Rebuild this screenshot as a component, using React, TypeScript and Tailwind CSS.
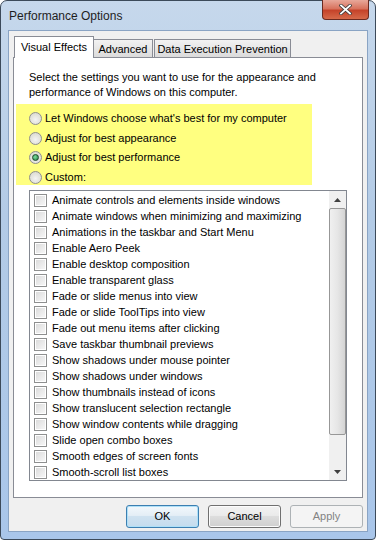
import React from "react";

const effects = [
  "Animate controls and elements inside windows",
  "Animate windows when minimizing and maximizing",
  "Animations in the taskbar and Start Menu",
  "Enable Aero Peek",
  "Enable desktop composition",
  "Enable transparent glass",
  "Fade or slide menus into view",
  "Fade or slide ToolTips into view",
  "Fade out menu items after clicking",
  "Save taskbar thumbnail previews",
  "Show shadows under mouse pointer",
  "Show shadows under windows",
  "Show thumbnails instead of icons",
  "Show translucent selection rectangle",
  "Show window contents while dragging",
  "Slide open combo boxes",
  "Smooth edges of screen fonts",
  "Smooth-scroll list boxes",
];

const options = [
  { label: "Let Windows choose what's best for my computer", checked: false },
  { label: "Adjust for best appearance", checked: false },
  { label: "Adjust for best performance", checked: true },
  { label: "Custom:", checked: false },
];

function Radio({ checked }: { checked: boolean }) {
  return (
    <span className="flex h-[13px] w-[13px] shrink-0 items-center justify-center rounded-full border border-[#8f8f8f] bg-[radial-gradient(circle_at_50%_60%,#f4f4f4,#d4d4c8)]">
      {checked && (
        <span className="h-[7px] w-[7px] rounded-full border border-[#1d4a2a] bg-[radial-gradient(circle_at_40%_40%,#7ee0a0,#1f7a3c)]" />
      )}
    </span>
  );
}

function Check() {
  return (
    <span className="flex h-[13px] w-[13px] shrink-0 items-center justify-center border border-[#8e8f8f] bg-white">
      <span className="h-[9px] w-[9px] bg-[linear-gradient(135deg,#dcdcdc,#f6f6f6)]" />
    </span>
  );
}

function Arrow({ up }: { up?: boolean }) {
  return (
    <svg width="7" height="4" viewBox="0 0 7 4">
      {up ? <path d="M0 4 L3.5 0 L7 4 Z" fill="#404040" /> : <path d="M0 0 L3.5 4 L7 0 Z" fill="#404040" />}
    </svg>
  );
}

export default function App() {
  return (
    <div
      className="h-[541px] w-[377px] overflow-hidden whitespace-nowrap bg-white text-[11px] leading-none text-black"
      style={{ fontFamily: "'Liberation Sans', Arial, sans-serif" }}
    >
      <div className="flex h-[540px] w-[376px] flex-col rounded-t-[7px] rounded-b-[4px] border border-[#3c4a5a] bg-[linear-gradient(180deg,#c6d8ec_0%,#b3cbe6_40%,#a9c6ea_100%)] px-[7px] pb-[7px]">
        {/* title bar */}
        <div className="relative flex h-[29px] shrink-0 items-center">
          <span className="pl-[1px] pt-[1px] text-[12px] text-[#1e1e1e]">Performance Options</span>
          <div className="absolute right-[-1px] top-[-1px] flex h-[20px] w-[47px] items-center justify-center rounded-b-[4px] border border-t-0 border-[#6b2a20] bg-[linear-gradient(180deg,#e8a89a_0%,#d8735e_45%,#c5432a_55%,#d66a4a_100%)]">
            <svg width="13" height="11" viewBox="0 0 13 11">
              <path d="M2 1.5 L11 9.5 M11 1.5 L2 9.5" stroke="#3a3a3a" strokeWidth="3.4" strokeLinecap="square" />
              <path d="M2 1.5 L11 9.5 M11 1.5 L2 9.5" stroke="#ffffff" strokeWidth="1.8" strokeLinecap="square" />
            </svg>
          </div>
        </div>

        {/* client area */}
        <div className="flex flex-1 flex-col border border-[#8aa4c4] bg-[#f0f0f0] px-[4px] pt-[5px]">
          {/* tabs */}
          <div className="flex h-[21px] items-end pl-[1px]">
            <div className="relative z-10 mb-[-1px] flex h-[22px] w-[80px] items-start justify-center border border-b-0 border-[#898c95] bg-white pt-[5px]">
              Visual Effects
            </div>
            <div className="flex h-[18px] w-[59px] items-center justify-center border border-l-0 border-b-0 border-[#898c95] bg-[linear-gradient(180deg,#f2f2f2,#dbdbdb)] pt-[1px]">
              Advanced
            </div>
            <div className="ml-[1px] flex h-[18px] w-[137px] items-center justify-center border border-b-0 border-[#898c95] bg-[linear-gradient(180deg,#f2f2f2,#dbdbdb)] pt-[1px]">
              Data Execution Prevention
            </div>
          </div>

          {/* tab panel */}
          <div className="flex h-[441px] flex-col border border-[#898c95] bg-white">
            <p className="px-[15px] pt-[12px] leading-[15px]">
              Select the settings you want to use for the appearance and
              <br />
              performance of Windows on this computer.
            </p>
            <div className="mx-[2px] mt-[4px] flex h-[81px] w-[296px] flex-col overflow-hidden bg-[#ffff80] pl-[13px] pt-[5px]">
              {options.map((o) => (
                <div key={o.label} className="flex h-[19.6px] shrink-0 items-center gap-[3px]">
                  <Radio checked={o.checked} />
                  <span>{o.label}</span>
                </div>
              ))}
            </div>

            {/* list box */}
            <div className="mx-[15px] mt-[5px] flex h-[291px] overflow-hidden border border-[#828790] bg-white">
              <div className="flex min-w-0 flex-1 flex-col overflow-hidden pl-[4px] pt-[1px]">
                {effects.map((e) => (
                  <div key={e} className="flex h-[16px] shrink-0 items-center gap-[5px]">
                    <Check />
                    <span>{e}</span>
                  </div>
                ))}
              </div>
              <div className="flex w-[17px] shrink-0 flex-col bg-[#f0f0f0]">
                <div className="flex h-[17px] items-center justify-center">
                  <Arrow up />
                </div>
                <div className="h-[227px] rounded-[2px] border border-[#979797] bg-[linear-gradient(90deg,#f0f0f0,#e6e6e6_50%,#d4d4d4)]" />
                <div className="flex-1" />
                <div className="flex h-[17px] items-center justify-center">
                  <Arrow />
                </div>
              </div>
            </div>
          </div>

          {/* buttons */}
          <div className="flex justify-end gap-[9px] pt-[7px]">
            <button className="h-[23px] w-[73px] rounded-[3px] border border-[#3c7fb1] bg-[linear-gradient(180deg,#f2f8fc_0%,#e4eef6_45%,#cfe2f0_50%,#c4dcee_100%)] shadow-[inset_0_0_0_1px_#aee0f8]">
              OK
            </button>
            <button className="h-[23px] w-[73px] rounded-[3px] border border-[#707070] bg-[linear-gradient(180deg,#f2f2f2_0%,#ebebeb_45%,#dddddd_50%,#cfcfcf_100%)] shadow-[inset_0_0_0_1px_#fcfcfc]">
              Cancel
            </button>
            <button className="h-[23px] w-[73px] rounded-[3px] border border-[#adb2b5] bg-[#f4f4f4] text-[#838383]">
              Apply
            </button>
          </div>
        </div>
      </div>
    </div>
  );
}
